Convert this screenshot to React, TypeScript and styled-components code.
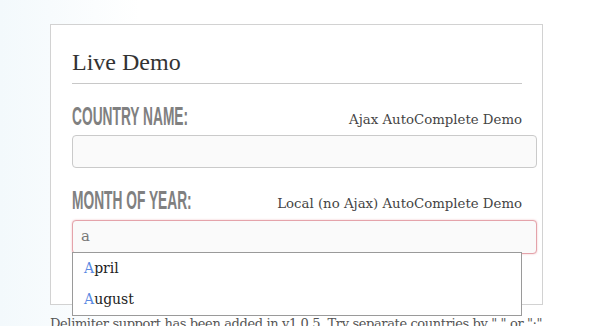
import styled, { createGlobalStyle } from "styled-components";

const GlobalStyle = createGlobalStyle`
  html, body {
    margin: 0;
    padding: 0;
  }
  body {
    width: 590px;
    height: 326px;
    overflow: hidden;
    background: linear-gradient(to right, #f3f9fc 0px, #f7fbfd 50px, #ffffff 140px);
  }
`;

const Page = styled.div`
  padding: 24px 0 0 50px;
`;

const Panel = styled.div`
  width: 450px;
  height: 225px;
  padding: 22px 20px 32px 21px;
  border: 1px solid #d2d2d2;
  background: #fff;
`;

const Title = styled.h2`
  margin: 0;
  font-family: "Liberation Serif", serif;
  font-weight: normal;
  font-size: 24px;
  line-height: 30px;
  color: #333;
  padding-bottom: 6px;
  border-bottom: 1px solid #c8c8c8;
`;

const LabelRow = styled.div<{ $top: number }>`
  display: flex;
  justify-content: space-between;
  align-items: flex-end;
  margin-top: ${(p) => p.$top}px;
  height: 26px;
`;

const FieldLabel = styled.span`
  display: inline-block;
  flex-shrink: 0;
  width: 120px;
  font-family: "Liberation Sans", sans-serif;
  font-weight: bold;
  font-size: 25px;
  line-height: 26px;
  color: #808080;
  transform: scaleX(0.55);
  transform-origin: left bottom;
  white-space: nowrap;
`;

const Hint = styled.span`
  font-family: "DejaVu Serif", serif;
  font-size: 13.3px;
  line-height: 18px;
  color: #444;
  white-space: nowrap;
`;

const FieldWrap = styled.div<{ $gap: number }>`
  position: relative;
  margin-top: ${(p) => p.$gap}px;
`;

const Input = styled.div<{ $focus?: boolean }>`
  box-sizing: border-box;
  width: 465px;
  height: ${(p) => (p.$focus ? 34 : 33)}px;
  padding: 0 8px;
  border: 1px solid ${(p) => (p.$focus ? "#e4a3aa" : "#cacaca")};
  box-shadow: ${(p) => (p.$focus ? "0 0 2px rgba(230,140,150,0.6)" : "none")};
  border-radius: 4px;
  background: #fafafa;
  font-family: "DejaVu Serif", serif;
  font-size: 15px;
  line-height: 31px;
  color: #777;
`;

const Dropdown = styled.ul`
  position: absolute;
  left: 0;
  top: 32px;
  box-sizing: border-box;
  width: 450px;
  margin: 0;
  padding: 0;
  list-style: none;
  border: 1px solid #9a9a9a;
  background: #fff;
`;

const Option = styled.li`
  height: 31px;
  padding: 0 11px;
  font-family: "DejaVu Serif", serif;
  font-size: 14px;
  line-height: 30px;
  color: #222;
`;

const Match = styled.span`
  color: #5a8ae2;
`;

const Note = styled.p`
  margin: 11px 0 0;
  font-family: "DejaVu Serif", serif;
  font-size: 13px;
  letter-spacing: -0.38px;
  color: #555;
  white-space: nowrap;
`;

const App = () => {
  return (
    <Page>
      <GlobalStyle />
      <Panel>
        <Title>Live Demo</Title>
        <LabelRow $top={19}>
          <FieldLabel>COUNTRY NAME:</FieldLabel>
          <Hint>Ajax AutoComplete Demo</Hint>
        </LabelRow>
        <FieldWrap $gap={6}>
          <Input />
        </FieldWrap>
        <LabelRow $top={19}>
          <FieldLabel>MONTH OF YEAR:</FieldLabel>
          <Hint>Local (no Ajax) AutoComplete Demo</Hint>
        </LabelRow>
        <FieldWrap $gap={7}>
          <Input $focus>a</Input>
          <Dropdown>
            <Option>
              <Match>A</Match>pril
            </Option>
            <Option>
              <Match>A</Match>ugust
            </Option>
          </Dropdown>
        </FieldWrap>
      </Panel>
      <Note>Delimiter support has been added in v1.0.5. Try separate countries by "," or ";"</Note>
    </Page>
  );
};

export default App;
